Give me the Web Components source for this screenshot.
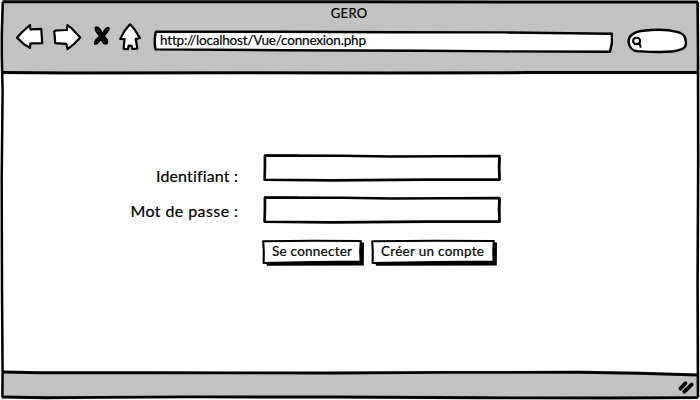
<!DOCTYPE html>
<html lang="fr">
<head>
<meta charset="utf-8">
<title>GERO</title>
<style>
html, body { margin: 0; width: 700px; height: 400px; overflow: hidden; background: #fff; font-family: Lato, "Open Sans", sans-serif; color: #000; }
</style>
</head>
<body>
<browser-window></browser-window>
<script>
function define(name, html, setup) {
  customElements.define(name, class extends HTMLElement {
    constructor() {
      super();
      this.attachShadow({ mode: 'open' }).innerHTML = html;
    }
    connectedCallback() { if (setup) setup(this, this.shadowRoot); }
  });
}

/* One line of text, spaced out to the width given in its "fit" attribute. */
define('sketch-text', `
<style>
:host { display: block; white-space: nowrap; -webkit-text-stroke: .2px #000; }
span { display: inline-block; }
</style><span></span>`, (el, root) => {
  const s = root.querySelector('span');
  s.textContent = el.getAttribute('text');
  const fit = +el.getAttribute('fit');
  el.style.width = fit + 'px';
  const n = s.textContent.length;
  s.style.letterSpacing = ((fit - s.getBoundingClientRect().width) / (n - 1)) + 'px';
});

define('sketch-input', `
<style>
:host { display: block; width: 239px; height: 29px; }
svg { display: block; }
</style>
<svg width="239" height="29" fill="none" stroke="#000" stroke-linejoin="round">
<path d="M3 2.5 L80 2.8 L130 3.5 L237.4 3 L237 14 L237.6 26.6 L165 26.6 L70 27.4 L2.6 26.8 L3 14Z" fill="#fff" stroke-width="2.6"/>
<path d="M2.4 2.2 L35 2.2 M2.6 3 V25 M238 4 L237.4 27" stroke-width="1.5"/>
</svg>`);

define('sketch-button', `
<style>
:host { display: grid; height: 27px; }
svg, .label { grid-area: 1 / 1; }
.label { font-size: 13.5px; line-height: 18px; padding: 3px 0 0 10px; }
</style>
<svg height="27"><path class="shade"/><path class="face" fill="#fff" stroke="#000" stroke-width="2.1" stroke-linejoin="round"/></svg>
<div class="label"><slot></slot></div>`, (el, root) => {
  const w = +el.getAttribute('w');
  el.style.width = w + 'px';
  root.querySelector('svg').setAttribute('width', w);
  root.querySelector('.shade').setAttribute('d', `M4 22 L${w - 5} 22 L${w - 5} 3.5 L${w} 3.5 L${w - .2} 26.6 L5 26.8Z`);
  root.querySelector('.face').setAttribute('d', `M1.2 2.2 L${w / 2} 1.7 L${w - 3.2} 2 L${w - 3.8} 12 L${w - 3.4} 22.6 L${w / 2} 23 L1.6 24 L1.8 13Z`);
});

define('nav-icons', `
<style>:host { display: block; width: 130px; height: 32px; } svg { display: block; }</style>
<svg width="130" height="32" viewBox="14 21 130 32" fill="#fff" stroke="#000" stroke-width="2.2" stroke-linejoin="round" stroke-linecap="round">
<path d="M17 37.6 L23 31.2 L30 25 L30.4 29.3 L41.3 28.9 L42.2 43.2 L30.4 43.3 L30 47.9 L24 44.3Z"/>
<path d="M54.2 31.5 L56 30.5 L67 30 L67.4 25 L72 28.7 L80.3 37.5 L74 44 L67.6 49.2 L66.3 43.8 L55.2 43.2 L54.8 37Z"/>
<path stroke="none" fill="#000" d="M95 26.6 Q98.3 25.6 100.7 29 L102.5 32.2 L104.6 28.8 Q107.2 25.8 109.3 27 Q110.7 29 107.8 32.8 L105 36 L107.8 39.4 Q109 43.7 106.8 44.6 Q103.4 45 101.5 41.4 L101 40.6 Q98.4 44.6 95.3 45 Q93 44.8 94.2 41.2 Q95.4 38.6 98.7 36 L96 32.5 Q93.6 28.8 95 26.6Z"/>
<path d="M130 24.3 L134 28.7 L139.9 38 L135.7 38.8 L137.3 48.6 L132.4 49 L131.7 45.8 L128.6 45.7 L128 49.2 L123.6 48.8 L124.5 39.2 L120.2 39 L124.5 31Z"/>
</svg>`);

define('address-bar', `
<style>
:host { display: grid; width: 460px; height: 24px; }
svg, .url { grid-area: 1 / 1; }
.url { font-size: 13.5px; line-height: 18px; padding: 1px 0 0 7px; }
</style>
<svg width="460" height="24" fill="none" stroke="#000" stroke-width="2.4" stroke-linejoin="round">
<path fill="#fff" d="M2.8 1.8 L130 1.8 L240 2.2 L350 2.4 L459 3.8 L458.9 13 L457 21.8 L350 21.4 L270 20.8 L130 20.2 L2.5 19.4 Q0.8 11 2.8 1.8Z"/>
</svg>
<div class="url"><slot></slot></div>`);

define('search-box', `
<style>:host { display: block; width: 62px; height: 27px; } svg { display: block; }</style>
<svg width="62" height="27" viewBox="626 28 62 27" fill="#fff" stroke="#000" stroke-width="2.4" stroke-linecap="round">
<path d="M628.6 42 C628 36.5 633 32 643 30.8 C655 29.4 669 29.8 677 31.8 C684.6 33.8 685.6 37 686 43 C686 48.2 682 50 674 51.2 C660 52.8 646 51.6 638 51.2 C632.5 50.8 629 47 628.6 42Z"/>
<ellipse cx="636.6" cy="40.9" rx="3.5" ry="3.2" stroke-width="2.1"/>
<path d="M635 43.9 L639.6 44 L640.6 46.8" fill="none" stroke-width="2"/>
</svg>`);

define('login-form', `
<style>
:host { display: grid; grid-template-columns: 238px 239px; column-gap: 24px; grid-template-rows: 42px 44px 27px; }
.label { display: flex; justify-content: flex-end; font-size: 16px; line-height: 20px; padding-top: 13px; }
.second { padding-top: 6px; }
.buttons { grid-column: 2; display: flex; gap: 7px; }
</style>
<div class="label"><sketch-text text="Identifiant :" fit="82"></sketch-text></div><sketch-input></sketch-input>
<div class="label second"><sketch-text text="Mot de passe :" fit="107.5"></sketch-text></div><sketch-input></sketch-input>
<div class="buttons">
<sketch-button w="102"><sketch-text text="Se connecter" fit="80"></sketch-text></sketch-button>
<sketch-button w="126"><sketch-text text="Créer un compte" fit="103"></sketch-text></sketch-button>
</div>`);

define('browser-window', `
<style>
:host { display: grid; width: 700px; height: 400px; }
.frame, .page { grid-area: 1 / 1; }
.page { display: flex; flex-direction: column; position: relative; }
.title { display: flex; justify-content: center; height: 21px; padding: 5px 2px 0 0; box-sizing: border-box; font-size: 13px; line-height: 16px; }
.bar { display: flex; height: 52px; padding-left: 14px; }
.bar address-bar { margin: 9px 13px 0 9px; }
.bar search-box { margin-top: 7px; }
main { flex: 1; padding-top: 80px; }
</style>
<svg class="frame" width="700" height="400" stroke="#000" fill="none" stroke-linejoin="round">
<rect width="700" height="400" fill="#fff" stroke="none"/>
<path d="M2 2 H698 V72.5 H2Z M3 372.5 L200 373 L560 372.2 L640 373.2 L698 374.8 V397 L3 397Z" fill="#c2c2c2" stroke="none"/>
<path d="M2.4 1.8 L350 1.8 L698 2" stroke-width="3"/>
<path d="M2.8 2 L1.8 34 L1.8 56 L2.6 90 L1.7 180 L2 290 L2.6 372 L2.4 397.3" stroke-width="2.5"/>
<path d="M697.6 2 L698 50 L698.2 160 L697.6 285 L698 397.5" stroke-width="2.6"/>
<path d="M2 72.4 L70 72.9 L240 72.8 L390 73 L530 72.6 L698 72.4" stroke-width="3"/>
<path d="M3 372 L40 372.8 L150 372.8 L330 373 L450 372.4 L580 372.3 L640 373.2 L698 375" stroke-width="2.9"/>
<path d="M2 397 L45 397.8 L100 397.4 L190 396.9 L330 397 L480 397.8 L610 398 L698 397.6" stroke-width="2.9"/>
<path d="M685.4 383.2 L680.4 388.6 M691.6 384.6 L684.4 391.6" stroke-width="3.9" stroke-linecap="round"/>
</svg>
<div class="page">
<div class="title"><sketch-text text="GERO" fit="36.5"></sketch-text></div>
<div class="bar"><nav-icons></nav-icons><address-bar><sketch-text text="http://localhost/Vue/connexion.php" fit="205.5"></sketch-text></address-bar><search-box></search-box></div>
<main><login-form></login-form></main>
</div>`);
</script>
</body>
</html>
